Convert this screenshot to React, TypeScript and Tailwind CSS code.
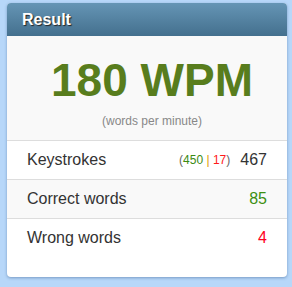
import React from 'react';

const App: React.FC = () => {
  return (
    <div className="w-[292px] h-[287px] bg-[#b7d7f9] pt-[3px] pl-[7px] font-['Liberation_Sans',Arial,sans-serif]">
      <div className="w-[280px] h-[274px] bg-white rounded-[4px] overflow-hidden shadow-[0_1px_3px_rgba(40,80,130,0.45)]">
        {/* Header */}
        <div className="h-[33px] flex items-center px-[15px] bg-gradient-to-b from-[#6595b5] to-[#44708e]">
          <span className="text-white font-bold text-[16px] leading-none [text-shadow:1px_1px_1px_#222]">
            Result
          </span>
        </div>

        {/* Speed */}
        <div className="h-[104px] bg-[#f9f9f9] flex flex-col items-center pt-[21px] pl-[10px]">
          <div className="text-[46px] leading-[46px] font-bold text-[#587d1d]">180 WPM</div>
          <div className="mt-[10px] text-[12px] leading-[16px] text-[#888]">(words per minute)</div>
        </div>

        {/* Stats */}
        <div className="h-[39px] border-t border-[#dddddd] bg-white flex items-center justify-between px-[20px] text-[16px] text-[#333]">
          <span>Keystrokes</span>
          <span className="flex items-center">
            <span className="text-[12px] text-[#666] mr-[10px]">
              (<span className="text-[#3d8a12]">450</span>
              <span className="text-[#e09a00]"> | </span>
              <span className="text-[#ff1a1a]">17</span>)
            </span>
            <span>467</span>
          </span>
        </div>
        <div className="h-[39px] border-t border-[#dddddd] bg-[#f9f9f9] flex items-center justify-between px-[20px] text-[16px] text-[#333]">
          <span>Correct words</span>
          <span className="text-[#3d8f12]">85</span>
        </div>
        <div className="h-[39px] border-t border-[#dddddd] bg-white flex items-center justify-between px-[20px] text-[16px] text-[#333]">
          <span>Wrong words</span>
          <span className="text-[#ff0022]">4</span>
        </div>
      </div>
    </div>
  );
};

export default App;
